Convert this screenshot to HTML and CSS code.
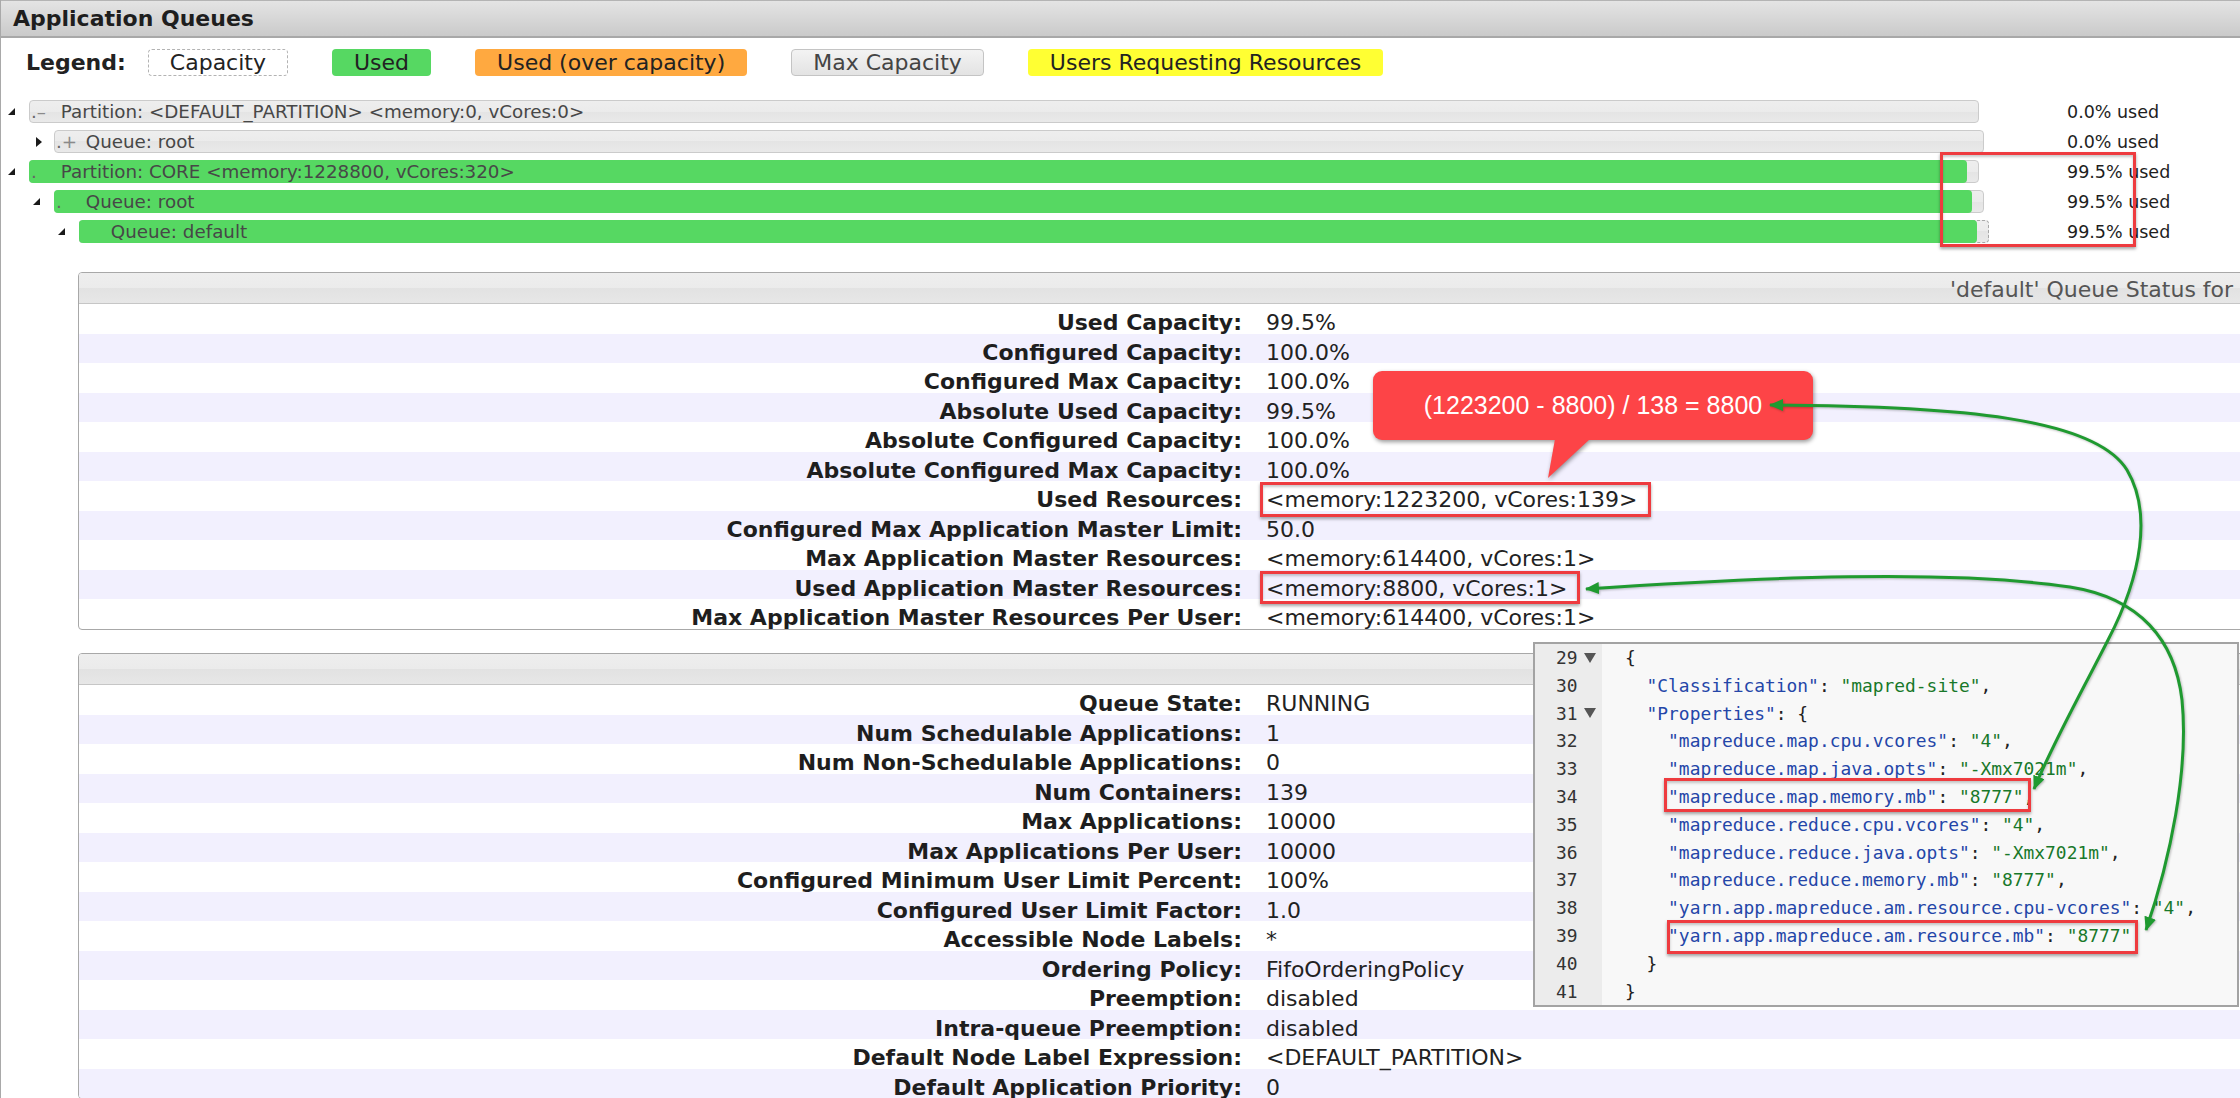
FILE: index.html
```html
<!DOCTYPE html>
<html lang="en">
<head>
<meta charset="utf-8">
<title>Application Queues</title>
<link rel="stylesheet" href="styles.css">
</head>
<body>
<div class="panel">
  <div class="panel-head">Application Queues</div>
  <div class="legend">
    <span class="legend-label">Legend:</span>
    <span class="lg lg-capacity">Capacity</span>
    <span class="lg lg-used">Used</span>
    <span class="lg lg-over">Used (over capacity)</span>
    <span class="lg lg-max">Max Capacity</span>
    <span class="lg lg-users">Users Requesting Resources</span>
  </div>

  <ul class="tree">
    <li class="node">
      <div class="node-main lvl0"><span class="twisty open"></span>
        <div class="bar"><span class="fill" style="width:0%"></span><span class="bar-text"><span class="dot">.</span><span class="sign">&#8211;</span>Partition: &lt;DEFAULT_PARTITION&gt; &lt;memory:0, vCores:0&gt;</span></div>
      </div>
      <div class="pct">0.0% used</div>
    </li>
    <li class="node">
      <div class="node-main lvl1"><span class="twisty closed"></span>
        <div class="bar"><span class="fill" style="width:0%"></span><span class="bar-text"><span class="dot">.</span><span class="sign">+</span>Queue: root</span></div>
      </div>
      <div class="pct">0.0% used</div>
    </li>
    <li class="node">
      <div class="node-main lvl0"><span class="twisty open"></span>
        <div class="bar"><span class="fill" style="width:99.5%"></span><span class="bar-text"><span class="dot">.</span><span class="sign"></span>Partition: CORE &lt;memory:1228800, vCores:320&gt;</span></div>
      </div>
      <div class="pct">99.5% used</div>
    </li>
    <li class="node">
      <div class="node-main lvl1"><span class="twisty open"></span>
        <div class="bar"><span class="fill" style="width:99.5%"></span><span class="bar-text"><span class="dot">.</span><span class="sign"></span>Queue: root</span></div>
      </div>
      <div class="pct">99.5% used</div>
    </li>
    <li class="node">
      <div class="node-main lvl2"><span class="twisty open"></span>
        <div class="bar selected"><span class="fill" style="width:99.5%"></span><span class="bar-text"><span class="dot nodot">.</span><span class="sign"></span>Queue: default</span></div>
      </div>
      <div class="pct">99.5% used</div>
    </li>
  </ul>

  <div class="qbox">
    <div class="qbox-head">'default' Queue Status for</div>
    <div class="rows">
      <div class="row"><span class="k">Used Capacity:</span><span class="v">99.5%</span></div>
      <div class="row"><span class="k">Configured Capacity:</span><span class="v">100.0%</span></div>
      <div class="row"><span class="k">Configured Max Capacity:</span><span class="v">100.0%</span></div>
      <div class="row"><span class="k">Absolute Used Capacity:</span><span class="v">99.5%</span></div>
      <div class="row"><span class="k">Absolute Configured Capacity:</span><span class="v">100.0%</span></div>
      <div class="row"><span class="k">Absolute Configured Max Capacity:</span><span class="v">100.0%</span></div>
      <div class="row"><span class="k">Used Resources:</span><span class="v">&lt;memory:1223200, vCores:139&gt;</span></div>
      <div class="row"><span class="k">Configured Max Application Master Limit:</span><span class="v">50.0</span></div>
      <div class="row"><span class="k">Max Application Master Resources:</span><span class="v">&lt;memory:614400, vCores:1&gt;</span></div>
      <div class="row"><span class="k">Used Application Master Resources:</span><span class="v">&lt;memory:8800, vCores:1&gt;</span></div>
      <div class="row"><span class="k">Max Application Master Resources Per User:</span><span class="v">&lt;memory:614400, vCores:1&gt;</span></div>
    </div>
  </div>

  <div class="qbox">
    <div class="qbox-head"></div>
    <div class="rows">
      <div class="row"><span class="k">Queue State:</span><span class="v">RUNNING</span></div>
      <div class="row"><span class="k">Num Schedulable Applications:</span><span class="v">1</span></div>
      <div class="row"><span class="k">Num Non-Schedulable Applications:</span><span class="v">0</span></div>
      <div class="row"><span class="k">Num Containers:</span><span class="v">139</span></div>
      <div class="row"><span class="k">Max Applications:</span><span class="v">10000</span></div>
      <div class="row"><span class="k">Max Applications Per User:</span><span class="v">10000</span></div>
      <div class="row"><span class="k">Configured Minimum User Limit Percent:</span><span class="v">100%</span></div>
      <div class="row"><span class="k">Configured User Limit Factor:</span><span class="v">1.0</span></div>
      <div class="row"><span class="k">Accessible Node Labels:</span><span class="v">*</span></div>
      <div class="row"><span class="k">Ordering Policy:</span><span class="v">FifoOrderingPolicy</span></div>
      <div class="row"><span class="k">Preemption:</span><span class="v">disabled</span></div>
      <div class="row"><span class="k">Intra-queue Preemption:</span><span class="v">disabled</span></div>
      <div class="row"><span class="k">Default Node Label Expression:</span><span class="v">&lt;DEFAULT_PARTITION&gt;</span></div>
      <div class="row"><span class="k">Default Application Priority:</span><span class="v">0</span></div>
    </div>
  </div>
</div>

<div class="code-panel">
  <div class="code">
    <div class="gut"><span class="ln">29</span><span class="fold"></span></div><div class="src">{</div>
    <div class="gut"><span class="ln">30</span></div><div class="src">  <span class="key">"Classification"</span>: <span class="str">"mapred-site"</span>,</div>
    <div class="gut"><span class="ln">31</span><span class="fold"></span></div><div class="src">  <span class="key">"Properties"</span>: {</div>
    <div class="gut"><span class="ln">32</span></div><div class="src">    <span class="key">"mapreduce.map.cpu.vcores"</span>: <span class="str">"4"</span>,</div>
    <div class="gut"><span class="ln">33</span></div><div class="src">    <span class="key">"mapreduce.map.java.opts"</span>: <span class="str">"-Xmx7021m"</span>,</div>
    <div class="gut"><span class="ln">34</span></div><div class="src">    <span class="key">"mapreduce.map.memory.mb"</span>: <span class="str">"8777"</span>,</div>
    <div class="gut"><span class="ln">35</span></div><div class="src">    <span class="key">"mapreduce.reduce.cpu.vcores"</span>: <span class="str">"4"</span>,</div>
    <div class="gut"><span class="ln">36</span></div><div class="src">    <span class="key">"mapreduce.reduce.java.opts"</span>: <span class="str">"-Xmx7021m"</span>,</div>
    <div class="gut"><span class="ln">37</span></div><div class="src">    <span class="key">"mapreduce.reduce.memory.mb"</span>: <span class="str">"8777"</span>,</div>
    <div class="gut"><span class="ln">38</span></div><div class="src">    <span class="key">"yarn.app.mapreduce.am.resource.cpu-vcores"</span>: <span class="str">"4"</span>,</div>
    <div class="gut"><span class="ln">39</span></div><div class="src">    <span class="key">"yarn.app.mapreduce.am.resource.mb"</span>: <span class="str">"8777"</span></div>
    <div class="gut"><span class="ln">40</span></div><div class="src">  }</div>
    <div class="gut"><span class="ln">41</span></div><div class="src">}</div>
  </div>
</div>

<div class="annot">
  <div class="hl hl-pct"></div>
  <div class="hl hl-used"></div>
  <div class="hl hl-am"></div>
  <div class="hl hl-map"></div>
  <div class="hl hl-yarn"></div>
  <div class="balloon"><div class="balloon-body">(1223200 - 8800) / 138 = 8800</div></div>
  <svg class="arrows" width="2240" height="1098" viewBox="0 0 2240 1098">
    <defs>
      <marker id="ah" viewBox="0 0 14 12" refX="13" refY="6" markerWidth="14" markerHeight="12" markerUnits="userSpaceOnUse" orient="auto-start-reverse">
        <path d="M0,0 L14,6 L0,12 z" fill="#1f9a30"/>
      </marker>
    </defs>
    <path class="arr" d="M1770,405 C1960,406 2095,418 2127,470 C2152,512 2142,575 2108,640 C2080,695 2052,745 2034,789" marker-start="url(#ah)" marker-end="url(#ah)"/>
    <path class="arr" d="M1586,589 C1760,577 1950,569 2070,587 C2140,598 2175,640 2182,700 C2189,770 2170,860 2146,930" marker-start="url(#ah)" marker-end="url(#ah)"/>
  </svg>
</div>
</body>
</html>
```

FILE: styles.css
```css
html, body {
  margin: 0;
  padding: 0;
  width: 2240px;
  height: 1098px;
  overflow: hidden;
  background: #fff;
}

body {
  position: relative;
  font-family: "DejaVu Sans", Verdana, sans-serif;
  font-size: 22px;
  color: #222;
}

.panel {
  border-left: 1px solid #a9a9a9;
  height: 1098px;
}

.panel-head {
  height: 35px;
  line-height: 35px;
  border-top: 1px solid #b4b4b4;
  border-bottom: 2px solid #a8a8a8;
  background: linear-gradient(#e4e4e4, #cacaca);
  font-weight: bold;
  padding-left: 12px;
  color: #1e1e1e;
}

/* legend */
.legend {
  display: flex;
  align-items: center;
  height: 27px;
  margin-top: 11px;
  padding-left: 25px;
}

.legend-label {
  font-weight: bold;
  margin-right: 22px;
}

.lg {
  height: 27px;
  box-sizing: border-box;
  line-height: 25px;
  padding: 0 21px;
  border: 1px solid transparent;
  border-radius: 4px;
  margin-right: 44px;
  font-size: 22px;
  white-space: nowrap;
}

.lg-capacity { border: 1px dashed #b3b3b3; }
.lg-used { background: #56d862; }
.lg-over { background: #ffa940; }
.lg-max {
  background: linear-gradient(#f3f3f3, #e3e3e3);
  border-color: #c4c4c4;
  color: #444;
}
.lg-users { background: #ffff33; }

/* tree */
.tree {
  list-style: none;
  margin: 20.5px 0 0;
  padding: 0;
}

.node {
  display: grid;
  grid-template-columns: 2066px auto;
  height: 30px;
  align-items: center;
}

.node-main {
  display: flex;
  align-items: center;
}

.lvl0 { padding-left: 7px; }
.lvl1 { padding-left: 32px; }
.lvl2 { padding-left: 57px; }

.twisty {
  flex: none;
  width: 21px;
  height: 23px;
  display: flex;
  align-items: center;
}

.twisty::before {
  content: "";
  width: 0;
  height: 0;
}

.twisty.open::before {
  border-left: 7px solid transparent;
  border-bottom: 7px solid #1a1a1a;
}

.twisty.closed::before {
  margin-left: 3px;
  border-top: 5px solid transparent;
  border-bottom: 5px solid transparent;
  border-left: 6px solid #1a1a1a;
}

.bar {
  position: relative;
  flex: none;
  height: 23px;
  box-sizing: border-box;
  border: 1px solid #cbcbcb;
  border-radius: 4px;
  background: linear-gradient(#eeeeee 0, #ebebeb 50%, #e4e4e4 50%, #e9e9e9 100%);
}

.lvl0 .bar { width: 1950px; }
.lvl1 .bar { width: 1930px; }
.lvl2 .bar { width: 1910px; }

.bar.selected { border: 1px dashed #a8a8a8; }

.fill {
  position: absolute;
  left: -1px;
  top: -1px;
  bottom: -1px;
  background: #56d862;
  border-radius: 4px;
}

.bar-text {
  position: relative;
  display: block;
  font-size: 18.3px;
  line-height: 21px;
  color: #474747;
  padding-left: 1px;
  white-space: nowrap;
}

.dot { color: #666; }
.nodot { visibility: hidden; }

.sign {
  display: inline-block;
  width: 24px;
  color: #8a8a8a;
}

.pct {
  font-size: 17.5px;
  color: #1e1e1e;
  white-space: nowrap;
}

/* queue info boxes */
.qbox {
  margin: 25.5px 0 0 77px;
  width: 2400px;
  border: 1px solid #a8a8a8;
  border-radius: 4px;
  overflow: hidden;
}

.qbox + .qbox { margin-top: 23.5px; }

.qbox-head {
  height: 28px;
  padding-top: 2px;
  line-height: 30px;
  border-bottom: 1px solid #c6c6c6;
  background: linear-gradient(#eeeeee 0, #ebebeb 50%, #e2e2e2 50%, #e7e7e7 100%);
  color: #555;
  padding-left: 1871px;
  white-space: nowrap;
}

.row {
  display: grid;
  grid-template-columns: 1163px 1fr;
  height: 29.5px;
  box-sizing: border-box;
  padding-top: 8px;
  line-height: 22px;
  white-space: nowrap;
}

.rows .row:nth-child(even) { background: #f2f0fe; }

.row .k {
  text-align: right;
  font-weight: bold;
  color: #1e1e1e;
}

.row .v { padding-left: 24px; }

/* pasted code snippet */
.code-panel {
  position: absolute;
  left: 1533px;
  top: 642px;
  width: 706px;
  height: 365px;
  box-sizing: border-box;
  border: 2px solid #a3a3a3;
  background: #f8f8f8;
  overflow: hidden;
}

.code {
  display: grid;
  grid-template-columns: 67px 1fr;
  font-family: "DejaVu Sans Mono", "Liberation Mono", monospace;
  font-size: 17.9px;
  line-height: 27.8px;
}

.gut {
  display: flex;
  align-items: center;
  height: 27.8px;
  padding-left: 21px;
  background: #ececec;
  color: #333;
}

.fold {
  width: 0;
  height: 0;
  margin-left: 6px;
  border-left: 6px solid transparent;
  border-right: 6px solid transparent;
  border-top: 10px solid #555;
}

.src {
  white-space: pre;
  padding-left: 23px;
  color: #222;
}

.key { color: #2446a8; }
.str { color: #18782a; }

/* annotations */
.annot {
  position: absolute;
  left: 0;
  top: 0;
  width: 2240px;
  height: 1098px;
  pointer-events: none;
}

.hl {
  position: absolute;
  box-sizing: border-box;
  border: 3px solid #ee3b3f;
  box-shadow: 0 2px 3px rgba(0, 0, 0, 0.35), inset 0 2px 3px rgba(0, 0, 0, 0.22);
}

.hl-pct { left: 1940px; top: 152px; width: 196px; height: 95px; }
.hl-used { left: 1260px; top: 482px; width: 391px; height: 35px; }
.hl-am { left: 1260px; top: 571px; width: 320px; height: 33px; }
.hl-map { left: 1664px; top: 778px; width: 367px; height: 34px; }
.hl-yarn { left: 1667px; top: 920px; width: 471px; height: 34px; }

.balloon {
  position: absolute;
  left: 1373px;
  top: 371px;
  width: 440px;
  height: 69px;
  filter: drop-shadow(1px 2px 2px rgba(0, 0, 0, 0.4));
}

.balloon-body {
  height: 100%;
  background: #fd4447;
  border-radius: 9px;
  color: #fff;
  font-family: "Liberation Sans", Arial, sans-serif;
  font-size: 25px;
  display: flex;
  align-items: center;
  justify-content: center;
}

.balloon::after {
  content: "";
  position: absolute;
  left: 175px;
  top: 68px;
  width: 42px;
  height: 39px;
  background: #fd4447;
  clip-path: polygon(7px 0, 42px 0, 0 39px);
}

.arrows {
  position: absolute;
  left: 0;
  top: 0;
}

.arr {
  fill: none;
  stroke: #1f9a30;
  stroke-width: 3;
  filter: drop-shadow(1px 1px 1px rgba(0, 0, 0, 0.25));
}
```
